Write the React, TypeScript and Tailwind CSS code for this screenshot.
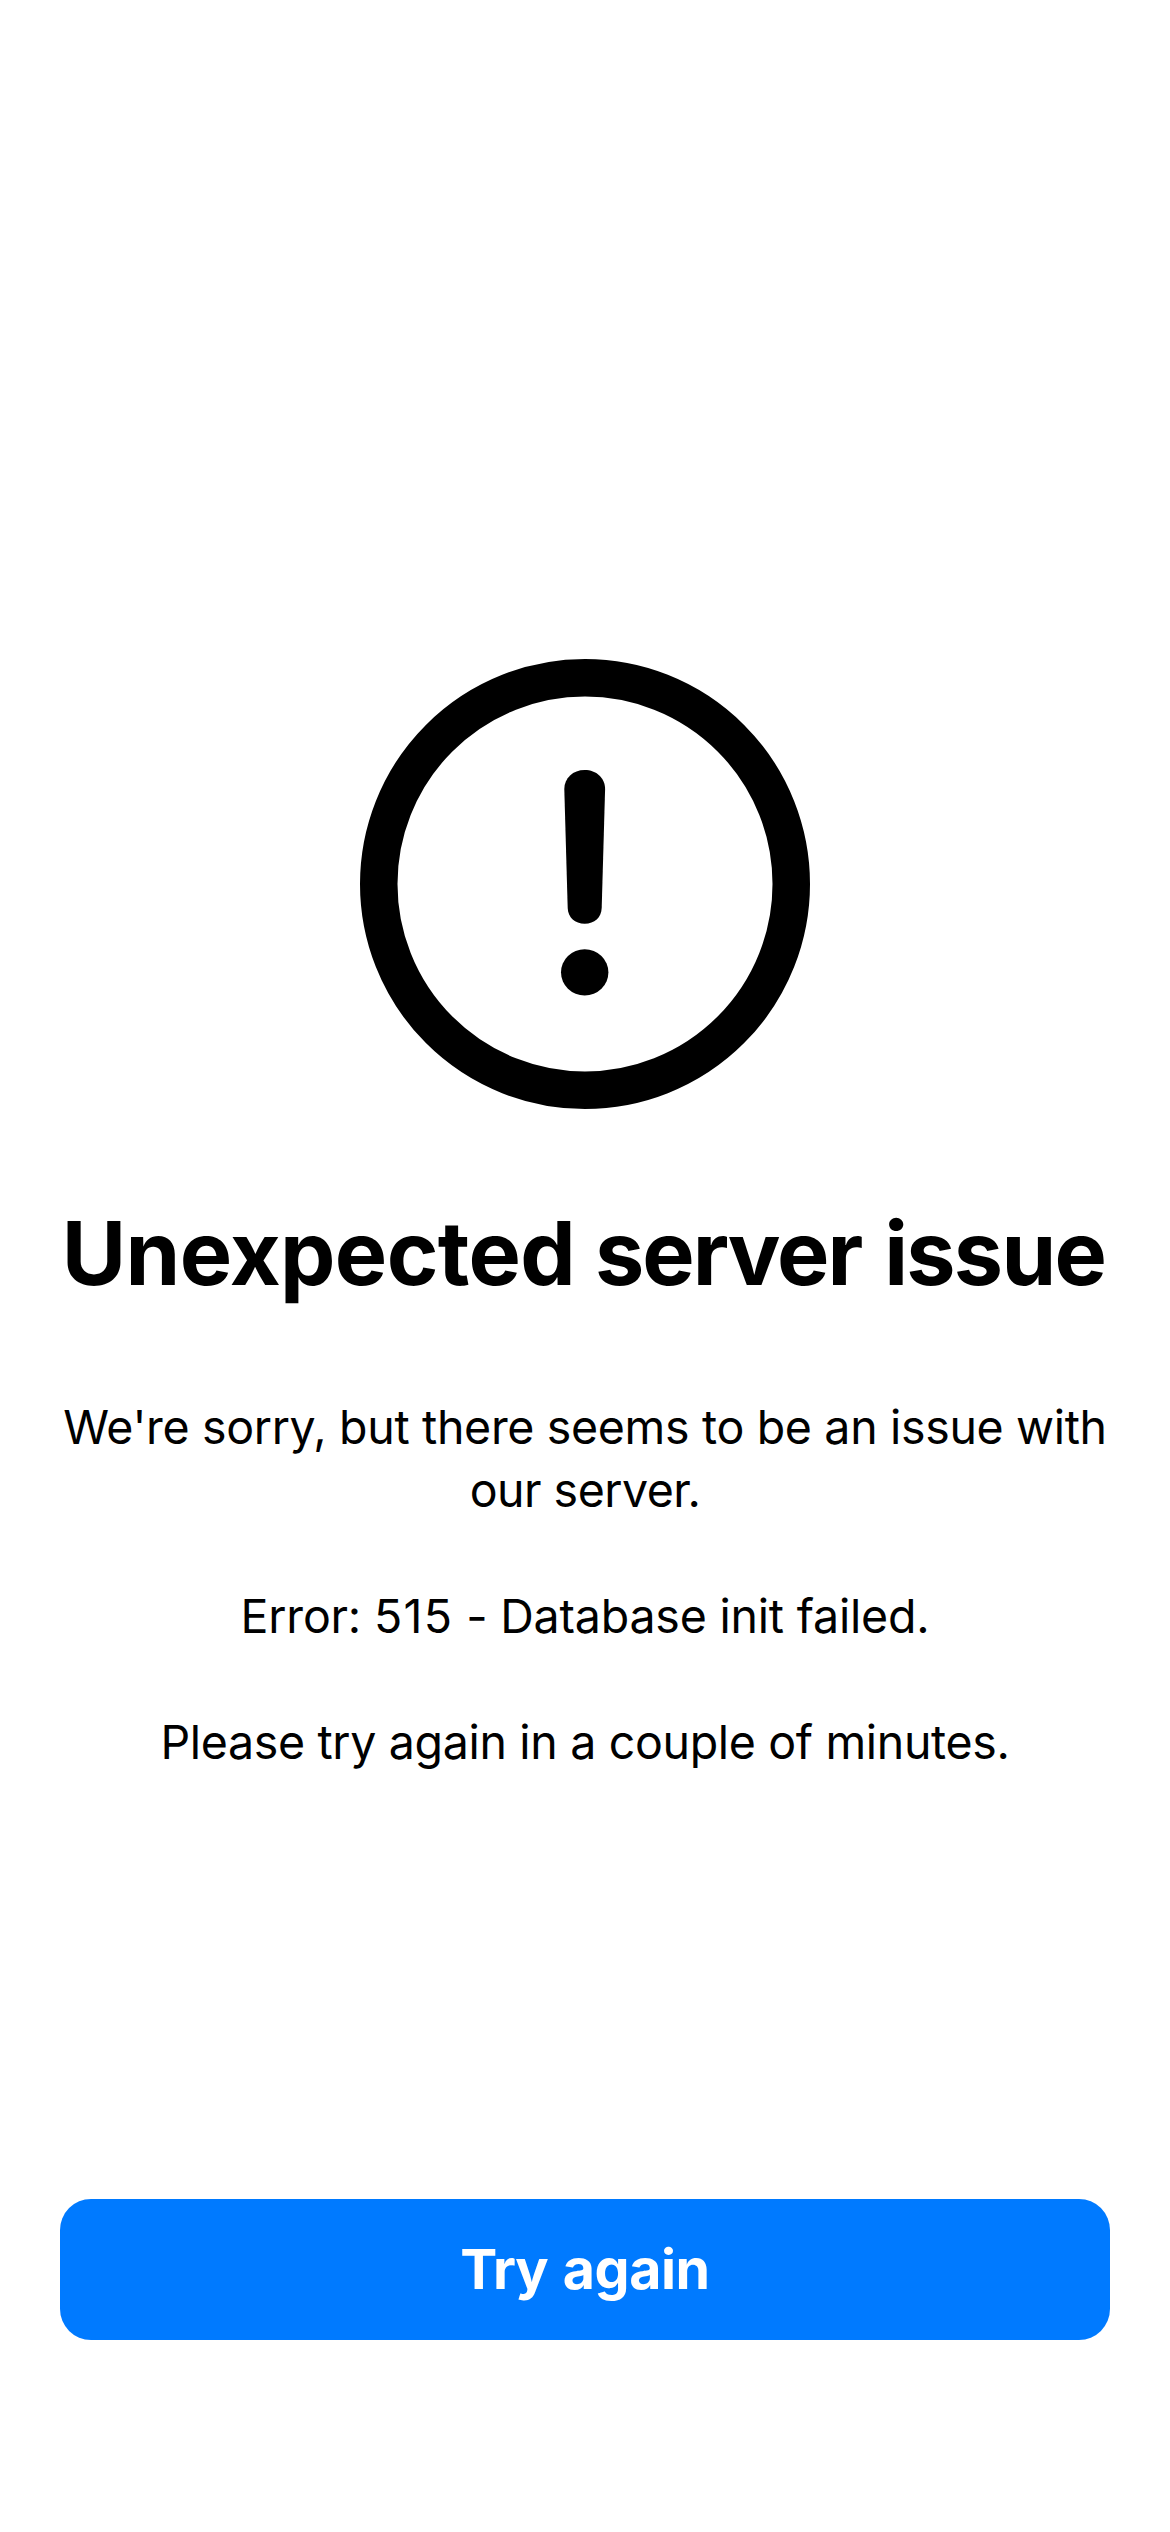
export default function App() {
  return (
    <main className="flex h-[2532px] w-[1170px] flex-col items-center bg-white px-[60px] pt-[659px] text-center font-['Inter',sans-serif] text-black">
      <svg className="size-[450px] shrink-0" viewBox="0 0 450 450" fill="currentColor" aria-hidden="true">
        <circle cx="225" cy="225" r="206.25" fill="none" stroke="currentColor" strokeWidth="37.5" />
        <path d="M204.3 130C204.3 119 213 111 224.7 111S245.1 119 245.1 130L241.7 249C241.3 258.500 234.500 264.700 224.700 264.700S208.100 258.500 207.700 249Z" />
        <ellipse cx="224.7" cy="313.3" rx="23.7" ry="23.1" />
      </svg>
      <h1 className="mt-[91px] mr-[3px] text-[88px] leading-[106px] font-bold whitespace-nowrap">
        <span className="tracking-[-0.65px]">Unexpected</span>{" "}
        <span className="mr-[2px] -ml-px tracking-[-2px]">server</span>{" "}
        <span className="tracking-[-1.7px]">issue</span>
      </h1>
      <div className="mt-[89.5px] text-[46.5px] leading-[63px] tracking-[-0.33px] whitespace-nowrap">
        <p>
          We're sorry, but there seems to be an issue with
          <br />
          <span className="tracking-[-0.5px]">our server.</span>
        </p>
        <p className="mt-[63px] tracking-[-0.2px]">
          Error: <span className="tracking-[1.3px]">515</span> - Database init failed.
        </p>
        <p className="mt-[63px]">Please try again in a couple of minutes.</p>
      </div>
      <button className="mt-auto mb-[192px] h-[141px] w-full shrink-0 rounded-[31px] bg-[#007aff] pb-[2px] text-[55.5px] font-bold tracking-[-0.4px] text-white">
        <span className="mr-[2.5px] tracking-[-1.2px]">Try</span> again
      </button>
    </main>
  );
}
